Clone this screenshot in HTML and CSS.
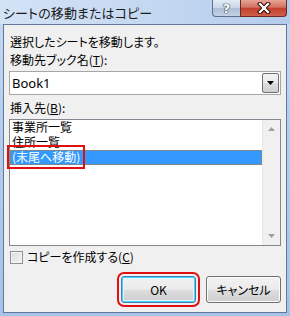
FILE: index.html
```html
<!DOCTYPE html>
<html lang="ja">
 <head>
  <meta charset="utf-8">
  <title>シートの移動またはコピー</title>
  <link rel="stylesheet" href="styles.css">
 </head>
 <body>
  <div class="window">
   <div class="titlebar">
    <span class="title">シートの移動またはコピー</span>
    <span class="caption">
     <span class="cap-help">?</span>
     <span class="cap-close">
      <svg width="14" height="12" viewBox="0 0 14 12"><path d="M3 2 L11 10 M11 2 L3 10" stroke="#3a1410" stroke-width="4.4" stroke-linecap="square"/><path d="M3 2 L11 10 M11 2 L3 10" stroke="#fff" stroke-width="2.2" stroke-linecap="square"/></svg>
     </span>
    </span>
   </div>
   <div class="client">
    <div class="text msg">選択したシートを移動します。</div>
    <div class="text label">移動先ブック名(<u>T</u>):</div>
    <div class="combo">
     <span class="combo-value">Book1</span>
     <span class="combo-btn"><svg width="7" height="4" viewBox="0 0 7 4"><path d="M0 0 H7 L3.5 4 Z" fill="#000"/></svg></span>
    </div>
    <div class="text label">挿入先(<u>B</u>):</div>
    <div class="list">
     <div class="items">
      <div class="item">事業所一覧</div>
      <div class="item">住所一覧</div>
      <div class="item selected"><span class="mark">(末尾へ移動)</span></div>
     </div>
     <div class="scrollbar">
      <svg width="7" height="4" viewBox="0 0 7 4"><path d="M3.5 0 L7 4 H0 Z" fill="#a0a0a0"/></svg>
      <svg width="7" height="4" viewBox="0 0 7 4"><path d="M0 0 H7 L3.5 4 Z" fill="#a0a0a0"/></svg>
     </div>
    </div>
    <label class="check"><span class="box"></span><span>コピーを作成する(<u>C</u>)</span></label>
    <div class="buttons">
     <button class="btn default">OK</button>
     <button class="btn">キャンセル</button>
    </div>
   </div>
  </div>
 </body>
</html>
```

FILE: styles.css
```css
html, body {
  margin:0; padding:0;
  width:290px; height:316px; overflow:hidden;
}
body {
  font-family:"Noto Sans CJK JP", "Noto Sans", sans-serif;
  font-size:12px; color:#000;
  font-feature-settings:"palt";
}
.window {
  box-sizing:border-box; width:290px; height:316px;
  display:flex; flex-direction:column;
  background:linear-gradient(to bottom, #c6daf2 0%, #b4cdee 40%, #a7c2e8 100%);
}
.titlebar {
  height:24px; flex:none;
  display:flex; align-items:flex-start; justify-content:space-between;
  background:linear-gradient(to right, #d3e3f6 0%, #c2d6f0 60%, #b3cbec 100%);
}
.title {
  padding:4px 0 0 3px;
  font-size:13px; line-height:18px; color:#1b1b1b;
  letter-spacing:0.1px;
}
.caption {
  display:flex; margin-right:3px;
}
.cap-help, .cap-close {
  box-sizing:border-box; height:17px;
  display:flex; align-items:center; justify-content:center;
  border:1px solid #5f6f88; border-top:none;
}
.cap-help {
  width:28px; border-radius:0 0 0 4px; border-right:none;
  background:linear-gradient(to bottom, #e3ebf5 0%, #c9d6e8 50%, #aebed6 51%, #c3d2e6 100%);
  color:#fff; font:bold 13px "DejaVu Sans", sans-serif;
  text-shadow:0 0 1px #2a3446, 0 0 1px #2a3446, 0 0 1px #2a3446;
}
.cap-close {
  width:47px; border-radius:0 0 4px 0; border-color:#6b2a22;
  background:linear-gradient(to bottom, #e6a496 0%, #d47261 45%, #c2402e 52%, #d0614b 100%);
}
.client {
  flex:1; margin:0 3px 3px 3px;
  border:1px solid #62779a;
  background:#f0f0f0;
  display:flex; flex-direction:column;
  padding:9px 5px 0 5px;
}
.text {
  line-height:16px; padding-left:1px; white-space:nowrap;
}
.label { margin-top:2px; }
.label + .list { margin-top:3px; }
u { text-decoration:underline; text-underline-offset:1px; }
.combo {
  margin:3px 0 3px 0; height:24px; box-sizing:border-box;
  border:1px solid #a7a7a7; background:#fff;
  display:flex; align-items:stretch;
}
.combo-value {
  flex:1; padding-left:2px; line-height:22px;
  font-family:"Noto Sans", sans-serif; font-size:13px;
}
.combo-btn {
  width:17px; margin:1px; box-sizing:border-box;
  border:1px solid #707070; border-radius:2px;
  background:linear-gradient(to bottom, #f2f2f2 0%, #ebebeb 50%, #dddddd 51%, #cfcfcf 100%);
  display:flex; align-items:center; justify-content:center;
}
.list {
  height:127px; box-sizing:border-box;
  border:1px solid #828790; background:#fff;
  display:flex;
}
.items {
  flex:1;
}
.item {
  height:15px; line-height:14px; padding-bottom:1px; box-sizing:border-box;
  padding-left:2px; white-space:nowrap;
}
.item.selected {
  background:#3399ff; color:#fff;
  outline:1px dotted #c97a1e; outline-offset:-1px;
}
.mark {
  position:relative;
}
.mark::after {
  content:""; position:absolute;
  left:-5px; right:-5px; top:-3px; bottom:-4px;
  border:2px solid #e01010;
}
.scrollbar {
  width:17px; background:#f0f0f0;
  border-left:1px solid #e8e8e8;
  display:flex; flex-direction:column; justify-content:space-between; align-items:center;
  padding:7px 0 7px 0;
}
.check {
  margin-top:3px; padding-left:1px;
  display:flex; align-items:center; gap:4px; line-height:16px;
}
.box {
  width:11px; height:11px;
  border:1px solid #8e8f8f;
  background:linear-gradient(135deg, #dcdcdc 0%, #f4f4f4 100%);
  box-shadow:inset 0 0 0 1px #f4f4f4;
}
.buttons {
  margin-top:11px;
  display:flex; justify-content:flex-end; gap:10px;
}
.btn {
  width:75px; height:27px; padding:0;
  border:1px solid #707070; border-radius:3px;
  background:linear-gradient(to bottom, #f2f2f2 0%, #ebebeb 50%, #dddddd 51%, #cfcfcf 100%);
  box-shadow:inset 0 0 0 1px #fcfcfc;
  font-family:"Noto Sans CJK JP", "Noto Sans", sans-serif; font-size:12px; color:#000;
  font-feature-settings:"palt";
}
.btn.default {
  border-color:#3c7fb1;
  box-shadow:inset 0 0 0 1px #48d2ff, inset 0 0 0 2px #dff6ff;
  outline:2px solid #e01010; outline-offset:2px;
}
```
